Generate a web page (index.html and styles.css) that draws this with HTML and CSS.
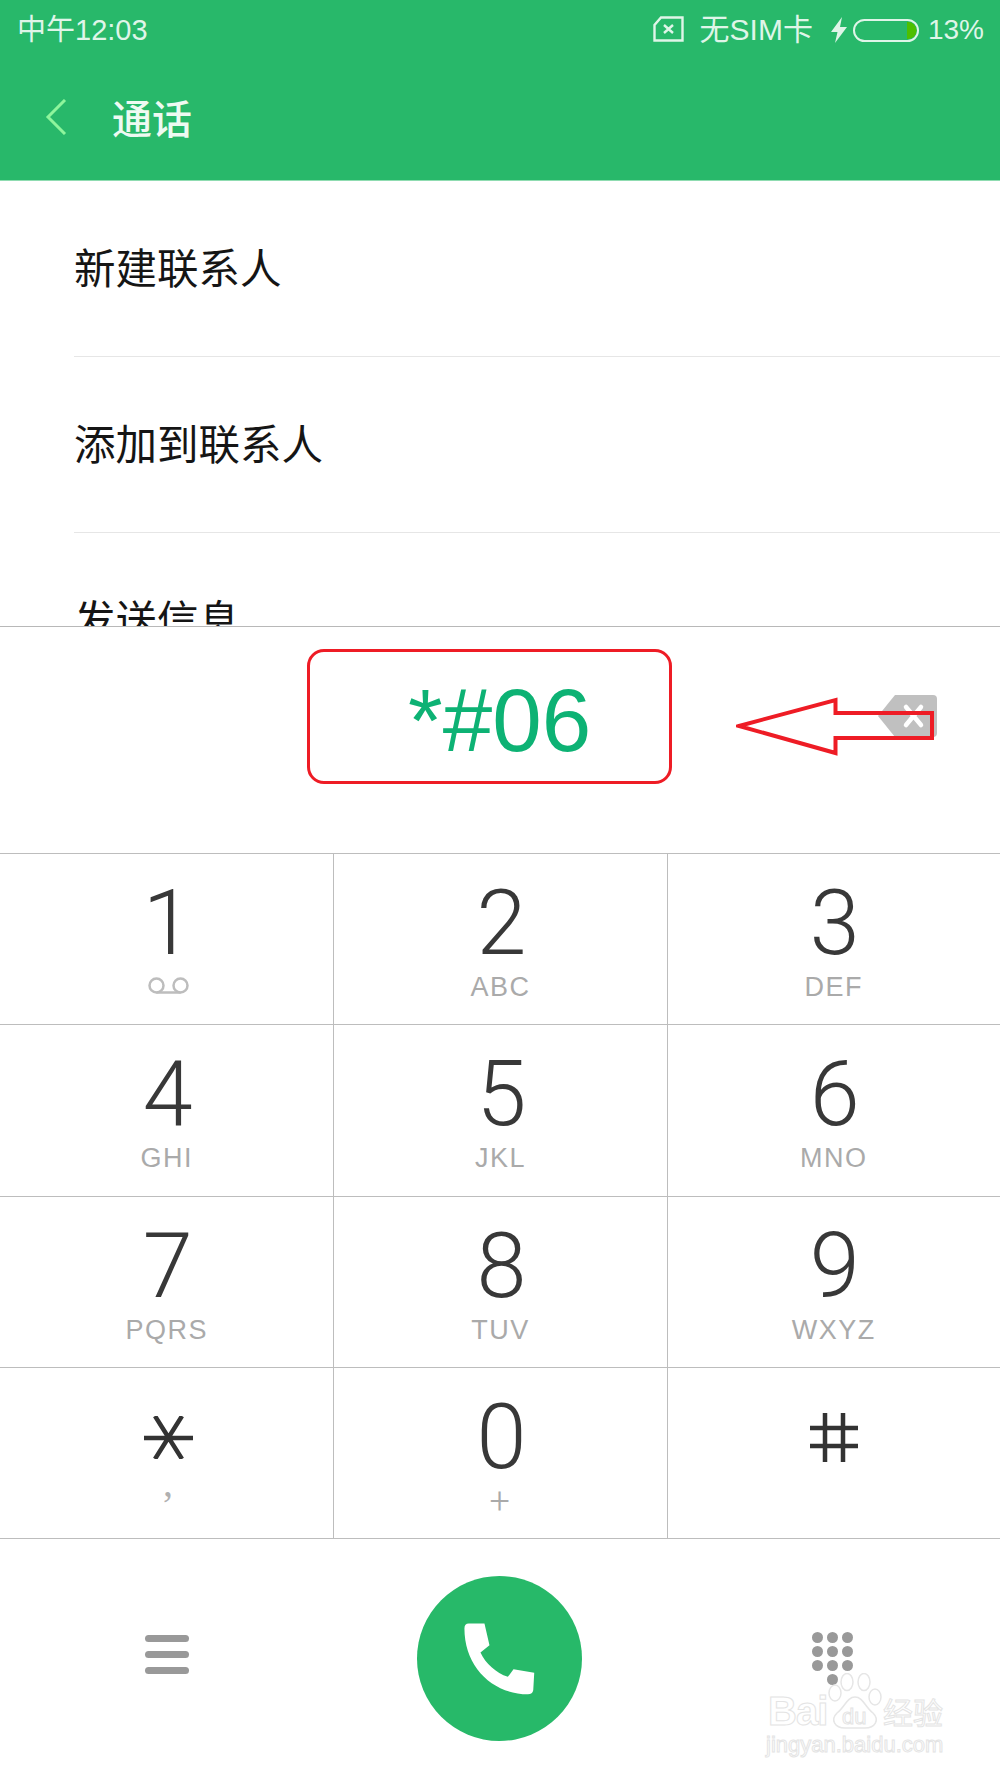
FILE: index.html
```html
<!DOCTYPE html>
<html lang="zh">
<head>
<meta charset="utf-8">
<title>通话</title>
<link rel="stylesheet" href="styles.css">
</head>
<body>
<div class="phone">
  <header class="appbar">
    <div class="status">
      <span class="time">中午12:03</span>
      <div class="status-right">
        <svg class="sim" viewBox="0 0 31 26"><path d="M8 1.5H29.5V24.5H1.5V9Z" fill="none" stroke="currentColor" stroke-width="2.4"/><path d="M11 9L20 17M20 9L11 17" stroke="currentColor" stroke-width="2.4"/></svg>
        <span class="nosim">无SIM卡</span>
        <svg class="bolt" viewBox="0 0 16 26"><path d="M11 0L0 15H6.5L4 26L16 10H9Z" fill="currentColor"/></svg>
        <svg class="battery" viewBox="0 0 66 23"><rect x="1" y="1" width="64" height="21" rx="10.5" fill="none" stroke="currentColor" stroke-width="2"/><path d="M54 3h1a8.500 8.500 0 0 1 0 17h-1Z" fill="#4dbf00"/></svg>
        <span class="pct">13%</span>
      </div>
    </div>
    <div class="toolbar">
      <svg class="back" viewBox="0 0 22 36"><path d="M20 1L3 18L20 35" fill="none" stroke="#8ef59c" stroke-width="3"/></svg>
      <h1 class="title">通话</h1>
    </div>
  </header>

  <ul class="menu">
    <li class="menu-item">新建联系人</li>
    <li class="menu-item">添加到联系人</li>
    <li class="menu-item">发送信息</li>
  </ul>

  <section class="display">
    <span class="number">*#06</span>
    <svg class="delete" viewBox="0 0 59 42"><path d="M17 0H55a4 4 0 0 1 4 4V38a4 4 0 0 1-4 4H17L0 21Z" fill="#c0c0c0"/><path d="M28 12L43 30M43 12L28 30" stroke="#fff" stroke-width="4.500" stroke-linecap="round"/></svg>
  </section>

  <section class="keypad">
    <div class="key"><span class="digit">1</span><svg class="vm" viewBox="0 0 41 17"><circle cx="8.500" cy="8.500" r="7" fill="none" stroke="#bdbdbd" stroke-width="2.500"/><circle cx="32.500" cy="8.500" r="7" fill="none" stroke="#bdbdbd" stroke-width="2.500"/><path d="M8.500 15.500H32.500" stroke="#bdbdbd" stroke-width="2.500"/></svg></div>
    <div class="key"><span class="digit">2</span><span class="sub">ABC</span></div>
    <div class="key"><span class="digit">3</span><span class="sub">DEF</span></div>
    <div class="key"><span class="digit">4</span><span class="sub">GHI</span></div>
    <div class="key"><span class="digit">5</span><span class="sub">JKL</span></div>
    <div class="key"><span class="digit">6</span><span class="sub">MNO</span></div>
    <div class="key"><span class="digit">7</span><span class="sub">PQRS</span></div>
    <div class="key"><span class="digit">8</span><span class="sub">TUV</span></div>
    <div class="key"><span class="digit">9</span><span class="sub">WXYZ</span></div>
    <div class="key">
      <svg class="star" viewBox="0 0 49 43"><path d="M0 22H49M11 0L38 43M38 0L11 43" stroke="#333" stroke-width="4.500" fill="none"/></svg>
      <span class="sub sub-comma">,</span>
    </div>
    <div class="key"><span class="digit">0</span><span class="sub sub-plus">+</span></div>
    <div class="key">
      <svg class="hash" viewBox="0 0 48 49"><path d="M0 15H48M0 33H48M15 0V49M33 0V49" stroke="#333" stroke-width="4.500" fill="none"/></svg>
    </div>
  </section>

  <footer class="actions">
    <div class="menu-icon"><i></i><i></i><i></i></div>
    <div class="call">
      <svg class="call-icon" viewBox="953 618 494 494"><circle cx="1200" cy="865" r="247" fill="#27b969"/><path d="M1108 760H1155L1170 825L1143 847C1158 880 1190 908 1225 920L1242 897L1304 908L1301 960Q1299 972 1285 972C1180 972 1095 890 1095 775Q1095 760 1108 760Z" fill="#fff"/></svg>
    </div>
    <div class="dots">
      <i></i><i></i><i></i><i></i><i></i><i></i><i></i><i></i><i></i><b></b><i></i>
    </div>
  </footer>

  <div class="note-box"></div>
  <svg class="note-arrow" viewBox="0 0 200 60"><path d="M3 29L99.500 3V16H196V41H99.500V56Z" fill="none" stroke="#ee1c25" stroke-width="4"/></svg>

  <div class="mark">
    <div class="mark-top">
      <span class="mark-bai">Bai</span>
      <span class="paw">
        <svg viewBox="0 0 56 56"><g fill="#fff" stroke="#e6e6e6" stroke-width="1.500"><ellipse cx="8" cy="20" rx="6" ry="8"/><ellipse cx="20" cy="9" rx="6" ry="8.500"/><ellipse cx="37" cy="9" rx="6" ry="8.500"/><ellipse cx="48" cy="24" rx="6" ry="8"/><path d="M28 24C36 24 38 34 46 40C53 47 48 55 38 55H18C8 55 3 47 10 40C18 34 20 24 28 24Z"/></g></svg>
        <span class="paw-du">du</span>
      </span>
      <span class="mark-jy">经验</span>
    </div>
    <div class="mark-url">jingyan.baidu.com</div>
  </div>
</div>
</body>
</html>
```
FILE: styles.css
```css
* { box-sizing: border-box; }
html, body { margin: 0; padding: 0; background: #fff; }
body { font-family: "Noto Sans CJK SC", "Liberation Sans", sans-serif; }
.phone { position: relative; width: 1000px; height: 1778px; overflow: hidden; background: #fff; }

.appbar { height: 181px; background: #28b86a; border-bottom: 1px solid #8fdcb1; color: #dff5e8; }
.status { height: 60px; display: flex; align-items: center; justify-content: space-between; padding: 0 16px 0 17px; font-family: "Liberation Sans", "Noto Sans CJK SC", sans-serif; font-size: 29px; }
.time { line-height: 1; }
.status-right { display: flex; align-items: center; }
.sim { width: 31px; height: 26px; margin-right: 16px; margin-top: -3px; }
.nosim { line-height: 1; font-size: 30px; }
.bolt { width: 16px; height: 26px; margin-left: 18px; color: #dff5e8; }
.battery { width: 66px; height: 23px; margin-left: 6px; }
.pct { margin-left: 9px; line-height: 1; font-size: 28px; }

.toolbar { height: 120px; display: flex; align-items: center; padding-left: 45px; padding-bottom: 6px; }
.back { width: 22px; height: 36px; }
.title { margin: 0 0 0 45px; font-size: 40px; line-height: 1; font-weight: 500; color: #eefaf2; }

.menu { list-style: none; margin: 0; padding: 0 0 0 74px; height: 445px; overflow: hidden; }
.menu-item { height: 176px; display: flex; align-items: center; padding-bottom: 5px; font-size: 41.500px; color: #151515; border-bottom: 1px solid #e6e6e6; }

.display { height: 227px; border-top: 1px solid #b8b8b8; display: flex; align-items: center; justify-content: space-between; padding: 0 63px 40px 0; }
.number { font-family: "Liberation Sans", sans-serif; font-size: 89px; line-height: 1; color: #0db274; margin-left: 408px; }
.delete { width: 59px; height: 42px; margin-top: -8px; }

.keypad { display: grid; grid-template-columns: repeat(3, 1fr); grid-auto-rows: 171.25px; border-top: 1px solid #bdbdbd; }
.key { display: flex; flex-direction: column; align-items: center; border-bottom: 1px solid #bdbdbd; border-left: 1px solid #bdbdbd; padding-top: 24px; }
.key:nth-child(3n+1) { border-left: 0; }
.digit { font-family: Roboto, "Liberation Sans", sans-serif; font-weight: 300; font-size: 90px; line-height: 92px; color: #383838; margin-left: 2px; }
.sub { font-family: "Liberation Sans", sans-serif; font-size: 27px; line-height: 30px; letter-spacing: 1.500px; color: #aaa; margin-top: 2px; }
.sub-comma { font-family: "Liberation Serif", serif; font-size: 40px; line-height: 30px; margin-top: 0; margin-left: 4px; color: #b0b0b0; }
.sub-plus { font-family: Roboto, sans-serif; font-weight: 300; font-size: 36px; }
.vm { width: 41px; height: 17px; margin-top: 7px; margin-left: 4px; }
.star { width: 49px; height: 43px; margin-top: 24px; margin-bottom: 9px; margin-left: 4px; }
.hash { width: 48px; height: 49px; margin-top: 21px; }

.actions { height: 240px; margin-top: -1px; display: grid; grid-template-columns: repeat(3, 1fr); align-items: center; justify-items: center; }
.menu-icon { display: flex; flex-direction: column; gap: 9px; margin-bottom: 8px; }
.menu-icon i { display: block; width: 44px; height: 7px; border-radius: 4px; background: #999; }
.call-icon { display: block; width: 165px; height: 165px; }
.dots { display: grid; grid-template-columns: repeat(3, 11px); grid-auto-rows: 11px; gap: 3px 4px; margin-left: -2px; }
.dots i { display: block; width: 11px; height: 11px; border-radius: 50%; background: #999; }
.dots b { display: block; }

.note-box { position: absolute; left: 307px; top: 649px; width: 365px; height: 135px; border: 3.500px solid #ee1c25; border-radius: 17px; }
.note-arrow { position: absolute; left: 736px; top: 697px; width: 200px; height: 60px; }

.mark { position: absolute; left: 768px; top: 1673px; width: 180px; }
.mark-top { display: flex; align-items: flex-end; height: 56px; }
.mark-bai, .paw-du, .mark-jy, .mark-url { font-family: "Liberation Sans", "Noto Sans CJK SC", sans-serif; color: #fff; -webkit-text-stroke: 1px #e4e4e4; }
.mark-bai { width: 59px; flex: none; font-size: 40px; font-weight: 700; line-height: 36px; letter-spacing: -1px; }
.paw { position: relative; width: 56px; height: 56px; flex: none; }
.paw svg { display: block; width: 56px; height: 56px; }
.paw-du { position: absolute; left: 15px; top: 33px; font-size: 22px; line-height: 1; }
.mark-jy { font-size: 30px; line-height: 36px; font-family: "Noto Sans CJK SC", sans-serif; white-space: nowrap; }
.mark-url { font-size: 22px; line-height: 24px; white-space: nowrap; margin-top: 4px; margin-left: -2px; }
```
